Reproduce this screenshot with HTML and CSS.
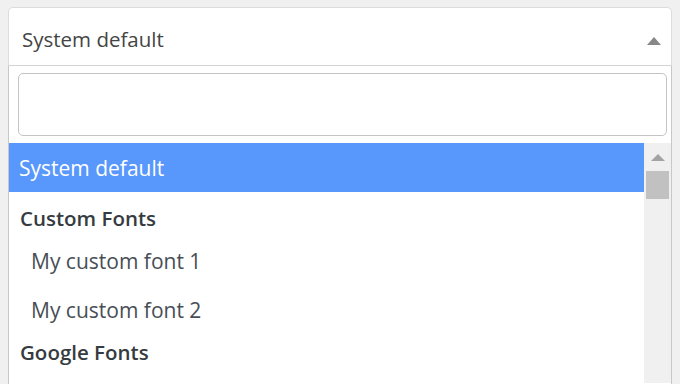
FILE: index.html
```html
<!DOCTYPE html>
<html>
<head>
<meta charset="utf-8">
<link rel="stylesheet" href="styles.css">
</head>
<body>
<div class="wrap">
  <div class="select">
    <span class="select-text">System default</span>
    <svg class="caret" width="14" height="8" viewBox="0 0 14 8"><polygon points="0,8 14,8 7,0" fill="#888"/></svg>
  </div>
  <div class="dropdown">
    <div class="search-wrap"><div class="search"></div></div>
    <div class="results">
      <ul class="list">
        <li class="item highlighted">System default</li>
        <li class="group first">Custom Fonts</li>
        <li class="item sub">My custom font 1</li>
        <li class="item sub">My custom font 2</li>
        <li class="group">Google Fonts</li>
      </ul>
      <div class="scrollbar">
        <svg class="sb-arrow" width="14" height="7" viewBox="0 0 14 7"><polygon points="0,7 14,7 7,0" fill="#a3a3a3"/></svg>
        <div class="thumb"></div>
      </div>
    </div>
  </div>
</div>
</body>
</html>
```
FILE: styles.css
```css
html, body {
  margin: 0;
  padding: 0;
  background: #f0f0f0;
  height: 384px;
  overflow: hidden;
  font-family: "Open Sans", "Noto Sans", sans-serif;
}
.wrap {
  padding: 7px 8px 0 8px;
}
.select {
  box-sizing: border-box;
  height: 59px;
  background: #fff;
  border: 1px solid #dcdcdc;
  border-bottom: 1px solid #d4d4d4;
  border-radius: 5px 5px 0 0;
  display: flex;
  align-items: flex-start;
  justify-content: space-between;
  padding: 16.5px 10px 0 13px;
}
.select-text {
  font-size: 20.5px;
  color: #444;
}
.caret {
  display: block;
  margin-top: 12px;
}
.dropdown {
  background: #fff;
  border-left: 1px solid #c8c8c8;
  border-right: 1px solid #c8c8c8;
  height: 330px;
}
.search-wrap {
  padding: 7px 4px 7px 9px;
}
.search {
  height: 61px;
  border: 1.5px solid #c4c4c4;
  border-radius: 5px;
  background: #fff;
}
.results {
  display: flex;
}
.list {
  flex: 1;
  list-style: none;
  margin: 0;
  padding: 0;
}
.item {
  font-size: 21px;
  color: #474e55;
  padding: 10.5px 0 10.5px 10px;
}
.highlighted {
  background: #5897fb;
  color: #fff;
  padding-bottom: 10.9px;
}
.sub {
  padding-left: 22px;
}
.group {
  font-size: 20.5px;
  font-weight: 600;
  color: #363b41;
  padding: 3.6px 0 0 11px;
}
.group.first {
  padding-top: 11.2px;
  padding-bottom: 4.5px;
}
.scrollbar {
  width: 27px;
  background: #f0f0f0;
  display: flex;
  flex-direction: column;
  align-items: center;
  height: 240px;
}
.sb-arrow {
  display: block;
  margin-top: 11px;
}
.thumb {
  margin-top: 10px;
  width: 23px;
  height: 28px;
  background: #c1c1c1;
}
```
